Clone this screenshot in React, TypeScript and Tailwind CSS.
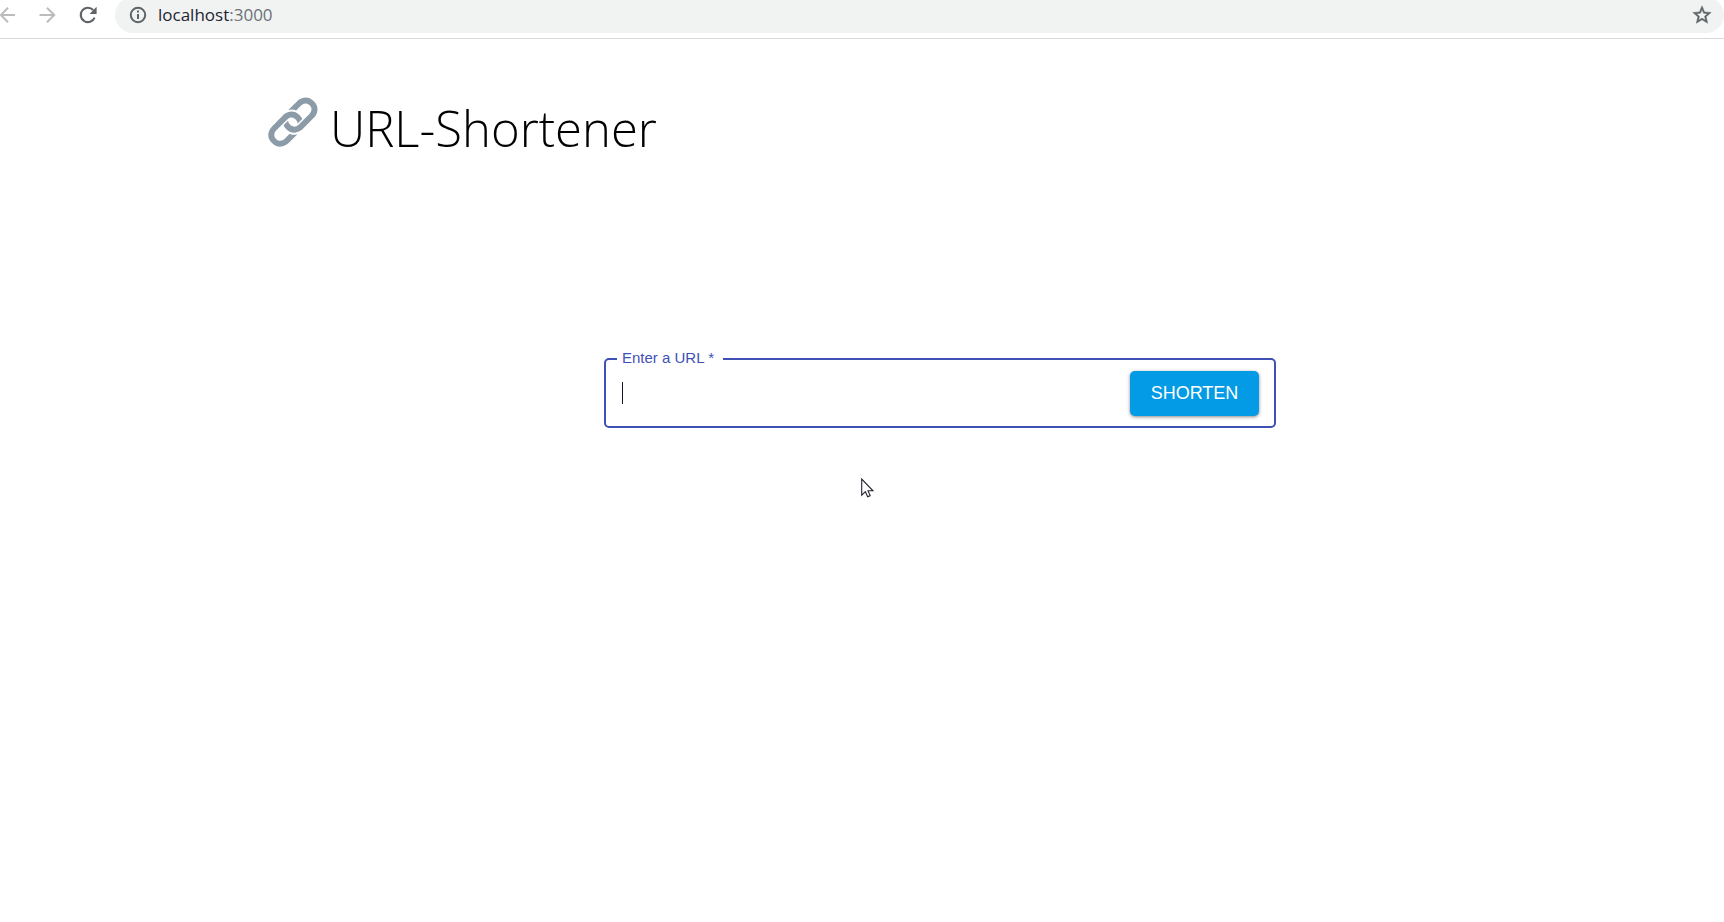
import { useState } from 'react';
import type { FormEvent } from 'react';

function BackIcon() {
  return (
    <svg viewBox="0 0 20 20" className="size-5" fill="none" stroke="#bcbcbe" strokeWidth="2">
      <path d="M19 10H5M12 2.8L4.8 10l7.2 7.2" />
    </svg>
  );
}

function ForwardIcon() {
  return (
    <svg viewBox="0 0 20 20" className="size-5" fill="none" stroke="#bcbcbe" strokeWidth="2">
      <path d="M2.5 10h14.5M10 2.8l7.2 7.2-7.2 7.2" />
    </svg>
  );
}

function ReloadIcon() {
  return (
    <svg viewBox="0 0 20 20" className="size-5" fill="none">
      <path d="M16.6 12.6A7.2 7.2 0 1 1 15.2 5" stroke="#5f6368" strokeWidth="2.1" />
      <path d="M18.6 1.8v7.1h-7.1z" fill="#5f6368" />
    </svg>
  );
}

function InfoIcon() {
  return (
    <svg viewBox="0 0 18 18" className="size-[18px]" fill="none" stroke="#5f6368" strokeWidth="2">
      <circle cx="9" cy="9" r="7.2" />
      <path d="M9 8v5M9 4.6v2" />
    </svg>
  );
}

function StarIcon() {
  return (
    <svg viewBox="0 0 24 24" className="size-[22px]" fill="#5f6368" stroke="#5f6368" strokeWidth=".5">
      <path d="M22 9.24l-7.19-.62L12 2 9.19 8.63 2 9.24l5.46 4.73L5.82 21 12 17.27 18.18 21l-1.63-7.03L22 9.24zM12 15.4l-3.76 2.27 1-4.28-3.32-2.88 4.38-.38L12 6.1l1.71 4.04 4.38.38-3.32 2.88 1 4.28L12 15.4z" />
    </svg>
  );
}

function LinkIcon() {
  return (
    <svg viewBox="0 0 36 36" className="size-[50px] shrink-0" fill="#8c9ba8" aria-hidden="true">
      <path d="M15 9l6-6s6-6 12 0 0 12 0 12l-8 8s-6 6-12 0c-1.125-1.125-1.822-2.62-1.822-2.62l3.353-3.348S14.396 18.396 16 20c0 0 3 3 6 0l8-8s3-3 0-6-6 0-6 0l-3.729 3.729s-1.854-1.521-5.646-.354L15 9z" />
      <path d="M20.845 27.178l-5.99 5.992s-6 6-12 0 0-12 0-12l8-8s6-6 12 0c1.125 1.125 1.822 2.62 1.822 2.62l-3.354 3.349s.135-1.365-1.469-2.97c0 0-3-3-6 0l-8 8s-3 3 0 6 6 0 6 0l3.729-3.729s1.854 1.521 5.646.354l-.384.384z" />
    </svg>
  );
}

function Pointer() {
  return (
    <svg viewBox="0 0 13 20" className="pointer-events-none absolute left-[257px] top-[120px] h-5 w-[13px]" aria-hidden="true">
      <path
        d="M.7 1v16.2l3.7-3.5 2.3 5 2.5-1.1-2.2-4.8h5z"
        fill="#fff"
        stroke="#25232f"
        strokeWidth="1.1"
      />
    </svg>
  );
}

function BrowserBar() {
  return (
    <header className="flex h-[39px] items-start overflow-hidden border-b border-[#d8d9db] bg-white">
      <nav aria-label="Browser" className="-ml-1 flex gap-[21px] pt-[5px]">
        <button type="button" aria-label="Back"><BackIcon /></button>
        <button type="button" aria-label="Forward"><ForwardIcon /></button>
        <button type="button" aria-label="Reload"><ReloadIcon /></button>
      </nav>
      <div className="-mt-[3px] ml-[17px] flex h-9 flex-1 items-center rounded-full bg-[#f0f3f2] pl-[14px] pr-[11px]">
        <InfoIcon />
        <span className="ml-[11px] flex-1 font-['Open_Sans',sans-serif] text-[17px] leading-6 text-[#1f2430]">
          localhost<span className="text-[#6b7076]">:3000</span>
        </span>
        <button type="button" aria-label="Bookmark this page"><StarIcon /></button>
      </div>
    </header>
  );
}

function UrlForm() {
  const [url, setUrl] = useState('');
  const submit = (event: FormEvent) => event.preventDefault();

  return (
    <form onSubmit={submit} className="relative col-start-2">
      <div className="flex h-[70px] items-center rounded-[5px] border-2 border-[#3f51b5] pl-4 pr-[15px]">
        <input
          id="url"
          value={url}
          onChange={(event) => setUrl(event.target.value)}
          className="h-full min-w-0 flex-1 bg-transparent font-['Liberation_Sans',sans-serif] text-lg caret-transparent outline-none"
        />
        <button
          type="submit"
          className="h-[45px] min-w-[129px] rounded-[5px] bg-[#039be5] px-5 font-['Liberation_Sans',sans-serif] text-lg text-white shadow-[0_1px_3px_rgba(0,0,0,0.35),0_1px_5px_rgba(0,0,0,0.15)]"
        >
          SHORTEN
        </button>
      </div>
      <label
        htmlFor="url"
        className="absolute -top-2 left-[13px] bg-white pl-[5px] pr-[9px] font-['Liberation_Sans',sans-serif] text-[15px] leading-4 text-[#3f51b5]"
      >
        Enter a URL *
      </label>
      {url === '' && (
        <span aria-hidden="true" className="pointer-events-none absolute left-[18px] top-6 h-[22px] w-px bg-[#14142a]" />
      )}
      <Pointer />
    </form>
  );
}

export default function App() {
  return (
    <div className="min-h-screen bg-white">
      <BrowserBar />
      <main className="mx-auto w-full max-w-[1188px] pt-[58px]">
        <h1 className="flex items-start gap-3 font-['Open_Sans',sans-serif] text-[49px] font-light leading-[62px] text-black">
          <LinkIcon />
          <span>URL-Shortener</span>
        </h1>
        <div className="mt-[199px] grid max-w-[1008px] grid-cols-[1fr_2fr]">
          <UrlForm />
        </div>
      </main>
    </div>
  );
}
